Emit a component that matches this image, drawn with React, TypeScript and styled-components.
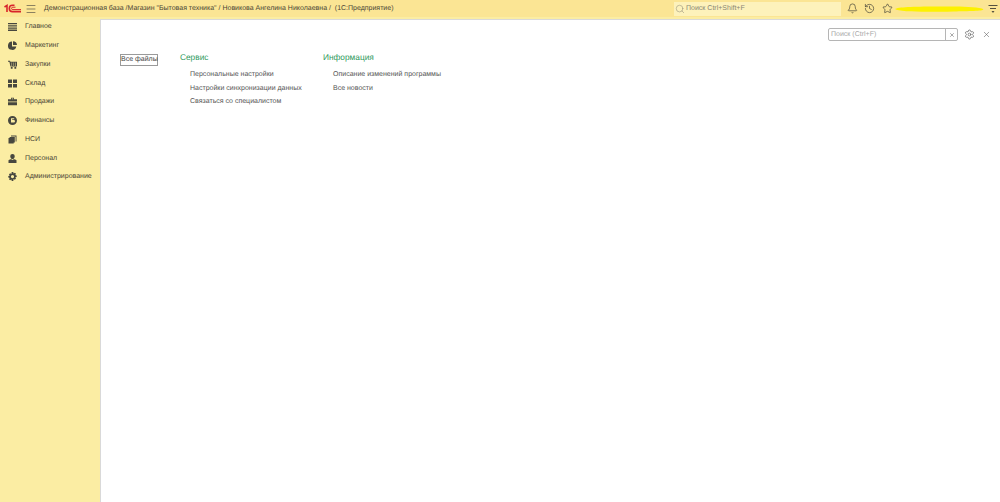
import React from 'react'
import styled, { createGlobalStyle } from 'styled-components'
import { Bell, History, Star, X, Settings, Search, Menu } from 'lucide-react'

const GlobalStyle = createGlobalStyle`
html, body {
  margin: 0;
  padding: 0;
  background: #fbeda3;
}
body {
  font-family: "Liberation Sans", Arial, sans-serif;
  color: #4c4c4c;
  text-rendering: geometricPrecision;
}
`

const Page = styled.div`
  width: 1000px;
  height: 502px;
  display: flex;
  flex-direction: column;
  overflow: hidden;
  background: #fbeda3;
  opacity: 0.999;
`

const TopBar = styled.div`
  height: 17px;
  display: flex;
  align-items: center;
  background: #fbe594;
  font-size: 7px;
  color: #4a4536;
`

const Logo = styled.svg`
  width: 17px;
  height: 11px;
  margin-left: 4px;
  margin-right: 4px;
`

const Burger = styled(Menu)`
  width: 12px;
  height: 12px;
  color: #5a5648;
  margin-right: 7px;
`

const Title = styled.span`
  width: 630px;
  white-space: pre;
`

const GlobalSearch = styled.div`
  width: 167px;
  height: 14px;
  display: flex;
  align-items: center;
  gap: 1px;
  padding-left: 1px;
  box-sizing: border-box;
  background: #fdf2bb;
  color: #8a8674;
  font-size: 7px;
`

const TopIcons = styled.div`
  display: flex;
  align-items: center;
  margin-left: 5.5px;
  gap: 6.5px;
  color: #4d4a3c;
`

const Scribble = styled.svg`
  width: 89px;
  height: 8px;
  margin-left: 2px;
`

const BottomMenu = styled.svg`
  width: 10px;
  height: 10px;
  margin-left: 4px;
`

const Body = styled.div`
  flex: 1;
  display: flex;
  min-height: 0;
`

const Sidebar = styled.nav`
  width: 100px;
  padding-top: 0.6px;
  display: flex;
  flex-direction: column;
  background: #fbeda3;
`

const SideItem = styled.div`
  height: 18.75px;
  display: flex;
  align-items: center;
  padding-left: 8px;
  gap: 8px;
  font-size: 7px;
  color: #4a4536;
`

const SideIcon = styled.svg`
  width: 9px;
  height: 9px;
  fill: #47473f;
  flex: none;
`

const Main = styled.main`
  flex: 1;
  margin-top: 2px;
  background: #fff;
  border-left: 1px solid #d9d9d9;
  border-top: 1px solid #d9d9d9;
  display: flex;
  flex-direction: column;
`

const SearchRow = styled.div`
  display: flex;
  justify-content: flex-end;
  align-items: center;
  padding: 8px 9px 0 0;
  height: 13px;
  color: #555;
`

const SearchBox = styled.div`
  width: 130px;
  height: 13px;
  box-sizing: border-box;
  display: flex;
  align-items: center;
  border: 1px solid #b5b5b5;
  border-radius: 2px;
  font-size: 7px;
  color: #a8a8a8;
  padding-left: 2px;
`

const SearchText = styled.span`
  flex: 1;
`

const ClearBtn = styled.span`
  width: 11px;
  height: 11px;
  border-left: 1px solid #b5b5b5;
  display: flex;
  align-items: center;
  justify-content: center;
  color: #555;
`

const Gear = styled(Settings)`
  width: 11px;
  height: 11px;
  margin-left: 6px;
`

const CloseIcon = styled(X)`
  width: 9px;
  height: 9px;
  margin-left: 7px;
`

const Content = styled.div`
  display: flex;
  align-items: flex-start;
  padding: 11px 0 0 19px;
`

const FilesBtn = styled.div`
  width: 36px;
  height: 10px;
  margin-top: 2px;
  margin-right: 22px;
  border: 1px solid #9a9a9a;
  font-size: 7px;
  line-height: 10px;
  text-align: center;
  color: #444;
  white-space: nowrap;
`

const Column = styled.section<{ width: number }>`
  width: ${({ width }) => width}px;
`

const Heading = styled.h2`
  margin: 0 0 6px;
  font-size: 8.3px;
  line-height: 10px;
  font-weight: normal;
  color: #2f9a5d;
`

const LinkItem = styled.div`
  margin-left: 10px;
  height: 13.5px;
  line-height: 13.5px;
  font-size: 7px;
  color: #555;
  white-space: nowrap;
`

const icons: Record<string, React.ReactElement> = {
  main: <path d="M0 1h9v1.3H0zM0 3.2h9v1.3H0zM0 5.4h9v1.3H0zM0 7.6h9v1.3H0z" />,
  marketing: <path d="M4 .5a4.2 4.2 0 1 0 4.3 5H4zM5 .3v3.6h4A4 4 0 0 0 5 .3z" />,
  purchases: <path d="M0 .8h2l.4 1H9v4.8H2.4L1.4 1.8H0zM3.2 2.7v.9h.9v-.9zM5.2 2.7v.9h.9v-.9zM7.1 2.7v.9H8v-.9zM3.2 4.5v.9h.9v-.9zM5.2 4.5v.9h.9v-.9zM7.1 4.5v.9H8v-.9zM2.8 7.1h1.8v1.7H2.8zM6.4 7.1h1.8v1.7H6.4z" />,
  stock: <path d="M0 .5h4v3.6H0zM5 .5h4v3.6H5zM0 5h4v3.6H0zM5 5h4v3.6H5z" />,
  sales: <path d="M3 .8h3v1.4h3v2.4H0V2.2h3zM3.8 1.5v.7h1.4v-.7zM0 5.3h9v3H0z" />,
  finance: <path d="M4.5 0a4.5 4.5 0 1 0 0 9 4.5 4.5 0 0 0 0-9zM3 2.2h3.2v1H4.2v.8h1.6a1.2 1.2 0 0 1 0 2.4H3z" />,
  nsi: <path d="M3 .5h5.5v6H7.6v-5H3zM1.6 1.9h5.2v5.5H5.7v1.2H.5V3h1.1z" />,
  staff: <path d="M4.5 0a2.2 2.2 0 0 1 2.2 2.4c0 1.4-1 2.6-2.2 2.6S2.3 3.8 2.3 2.4A2.2 2.2 0 0 1 4.5 0zM.5 6.3c1-.8 2-1 2.8-1.1L4.5 6l1.2-.8c.8.1 1.8.3 2.8 1.1V9h-8z" />,
  admin: <path fillRule="evenodd" d="M3.7 0h1.6l.3 1.4 1.3-.7 1.1 1.1-.7 1.3 1.4.3v1.6l-1.4.3.7 1.3-1.1 1.1-1.3-.7L5.3 9H3.7l-.3-1.4-1.3.7L1 7.2l.7-1.3L.3 5.6V4l1.4-.3L1 2.4l1.1-1.1 1.3.7zM4.5 3a1.6 1.6 0 1 0 0 3.2 1.6 1.6 0 0 0 0-3.2z" />
}

const sideItems = [
  { icon: 'main', label: 'Главное' },
  { icon: 'marketing', label: 'Маркетинг' },
  { icon: 'purchases', label: 'Закупки' },
  { icon: 'stock', label: 'Склад' },
  { icon: 'sales', label: 'Продажи' },
  { icon: 'finance', label: 'Финансы' },
  { icon: 'nsi', label: 'НСИ' },
  { icon: 'staff', label: 'Персонал' },
  { icon: 'admin', label: 'Администрирование' }
]

export default function App (): React.ReactElement {
  return (
    <Page>
      <GlobalStyle />
      <TopBar>
        <Logo viewBox="0 0 17 11">
          <g fill="none" stroke="#d8232a" strokeWidth="1.6">
            <path d="M.5 4 3 2.4V9" />
            <path d="M10.5 2.2H8.5a3.2 3.2 0 0 0 0 6.4h8.5" />
            <path d="M11.5 4.2H8.8a1.2 1.2 0 0 0 0 2.4H17" strokeWidth="1" />
          </g>
        </Logo>
        <Burger strokeWidth={1.4} />
        <Title>Демонстрационная база /Магазин "Бытовая техника" / Новикова Ангелина Николаевна /  (1С:Предприятие)</Title>
        <GlobalSearch>
          <Search size={10} strokeWidth={1.2} />
          Поиск Ctrl+Shift+F
        </GlobalSearch>
        <TopIcons>
          <Bell size={11} strokeWidth={1.6} />
          <History size={11} strokeWidth={1.6} />
          <Star size={11} strokeWidth={1.6} />
        </TopIcons>
        <Scribble viewBox="0 0 89 8">
          <path d="M0 4C3 1.5 30 1.2 60 1.6c12 .2 25 .8 28.5 2.6-.6 2-15 1.8-30 2.2C30 7 4 7 0 4z" fill="#fdf100" />
        </Scribble>
        <BottomMenu viewBox="0 0 10 10">
          <path d="M.5 1.5h9M2 4.5h6" stroke="#55523f" strokeWidth="1.2" />
          <path d="M3.5 7h3L5 9z" fill="#55523f" />
        </BottomMenu>
      </TopBar>
      <Body>
        <Sidebar>
          {sideItems.map(item => (
            <SideItem key={item.label}>
              <SideIcon viewBox="0 0 9 9">{icons[item.icon]}</SideIcon>
              {item.label}
            </SideItem>
          ))}
        </Sidebar>
        <Main>
          <SearchRow>
            <SearchBox>
              <SearchText>Поиск (Ctrl+F)</SearchText>
              <ClearBtn><X size={6} strokeWidth={2} /></ClearBtn>
            </SearchBox>
            <Gear strokeWidth={1.4} />
            <CloseIcon strokeWidth={1.4} />
          </SearchRow>
          <Content>
            <FilesBtn>Все файлы</FilesBtn>
            <Column width={143}>
              <Heading>Сервис</Heading>
              <LinkItem>Персональные настройки</LinkItem>
              <LinkItem>Настройки синхронизации данных</LinkItem>
              <LinkItem>Связаться со специалистом</LinkItem>
            </Column>
            <Column width={200}>
              <Heading>Информация</Heading>
              <LinkItem>Описание изменений программы</LinkItem>
              <LinkItem>Все новости</LinkItem>
            </Column>
          </Content>
        </Main>
      </Body>
    </Page>
  )
}
